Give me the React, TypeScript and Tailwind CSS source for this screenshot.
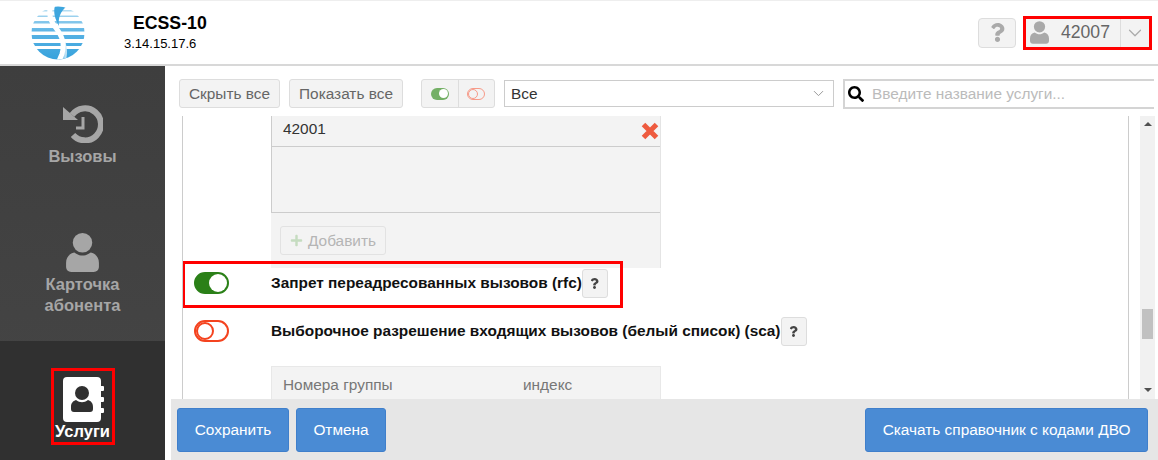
import React from 'react';
import { FaQuestion, FaPlus, FaSearch } from 'react-icons/fa';
import { ChevronDown } from 'lucide-react';

const Logo = () => (
  <svg width="54" height="54" viewBox="0 0 54 54">
    <defs>
      <clipPath id="disc"><circle cx="27" cy="27" r="26.5" /></clipPath>
      <linearGradient id="stripes" x1="0" x2="0" y1="0" y2="1">
        <stop offset="0" stopColor="#b5ddf2" />
        <stop offset="0.45" stopColor="#58b2e4" />
        <stop offset="1" stopColor="#36a2dc" />
      </linearGradient>
      <linearGradient id="tail" x1="0" x2="1" y1="0" y2="0">
        <stop offset="0" stopColor="#3ea6de" />
        <stop offset="1" stopColor="#d6edf9" />
      </linearGradient>
    </defs>
    <g clipPath="url(#disc)">
      <path
        d="M0 4h54v1.5H0zM0 9.5h54v1.5H0zM0 15h54v2.5H0zM0 22h54v3.5H0zM0 29h54v4H0zM0 37h54v3H0zM0 43h54v11H0z"
        fill="url(#stripes)"
      />
      <path d="M31 30c5 7 6 15 4 24h-7c3-8 3-16 3-24z" fill="url(#tail)" />
      <path d="M20-1C17 8 20 16 25 22c6 8 9 15 6 26l-3 7" fill="none" stroke="#fff" strokeWidth="5" />
      <path d="M24 0c-2 6 0 13 4 20-1-8 1-14 8-20z" fill="#3ea6de" />
    </g>
  </svg>
);

const HistoryIcon = () => (
  <svg width="40" height="38" viewBox="-1 0 40 38" fill="none" stroke="currentColor">
    <path d="M8 10A16 16 0 1 1 9 30" strokeWidth="6" />
    <path d="M-1 2v13h15z" fill="currentColor" stroke="none" />
    <path d="M19 12v11h-7" strokeWidth="3" />
  </svg>
);

const UserIcon = ({ className }: { className: string }) => (
  <svg viewBox="0 0 32 38" className={className} fill="currentColor">
    <circle cx="16" cy="9.5" r="9.5" />
    <path d="M8 19c5 4 11 4 16 0 5 1 8 5 8 10v4c0 3-2 5-5 5H5c-3 0-5-2-5-5v-4c0-5 3-9 8-10z" />
  </svg>
);

const BookIcon = () => (
  <svg width="41" height="45" viewBox="0 0 41 45">
    <rect width="38" height="45" rx="4" fill="#fff" />
    <path d="M38 9h2a1 1 0 0 1 1 1v3a1 1 0 0 1-1 1h-2zM38 20h2a1 1 0 0 1 1 1v3a1 1 0 0 1-1 1h-2zM38 31h2a1 1 0 0 1 1 1v3a1 1 0 0 1-1 1h-2z" fill="#fff" />
    <circle cx="19" cy="16" r="7" fill="#303030" />
    <path d="M13 23c4 3 8 3 12 0 3 1 5 3 5 7v2c0 2-1 3-3 3H11c-2 0-3-1-3-3v-2c0-4 2-6 5-7z" fill="#303030" />
  </svg>
);

const CrossIcon = () => (
  <svg width="18" height="18" viewBox="0 0 18 18" stroke="#ee5b3f" strokeWidth="5">
    <path d="M2.5 2.5l13 13M15.5 2.5l-13 13" />
  </svg>
);

const Toggle = ({ on }: { on: boolean }) => (
  <span className={`flex h-[22px] w-[35px] shrink-0 items-center rounded-full border-2 ${on ? 'justify-end border-[#2b8018] bg-[#2b8018]' : 'border-[#f4431f] bg-white'}`}>
    <span className={`size-[18px] rounded-full ${on ? 'bg-white' : 'border-2 border-[#f4431f] bg-white'}`} />
  </span>
);

const HelpButton = () => (
  <button className="flex h-[29px] w-[26px] shrink-0 items-center justify-center rounded-[3px] border border-[#ddd] bg-[#f3f3f3] text-[#444]">
    <FaQuestion size={11} />
  </button>
);

const ServiceRow = ({ on, title, className }: { on: boolean; title: string; className?: string }) => (
  <div className={`flex h-[30px] shrink-0 items-center pl-[11px] ${className ?? ''}`}>
    <Toggle on={on} />
    <span className="ml-[42px] text-[15.4px] font-bold text-[#111]">{title}</span>
    <HelpButton />
  </div>
);

const ToolButton = ({ className, children }: { className: string; children: React.ReactNode }) => (
  <button className={`h-[29px] rounded-[3px] border border-[#ddd] bg-[#f3f3f3] ${className}`}>{children}</button>
);

const FooterButton = ({ className, children }: { className: string; children: React.ReactNode }) => (
  <button className={`h-[44px] rounded-[3px] border border-[#3f7fcb] bg-[#4a8bd4] text-white ${className}`}>{children}</button>
);

export default function App() {
  return (
    <div className="flex h-[460px] w-[1158px] flex-col overflow-hidden bg-white font-['Liberation_Sans',Arial,sans-serif] text-[#333]">
      {/* шапка */}
      <header className="flex h-[66px] shrink-0 items-center border-t border-b-2 border-t-[#eee] border-b-[#d8d8d8] pr-[6px]">
        <div className="ml-[31px]"><Logo /></div>
        <div className="ml-[39px] w-[90px] text-black">
          <div className="pl-[9px] text-[17.7px] leading-[22px] font-bold">ECSS-10</div>
          <div className="text-[13px] leading-[20px]">3.14.15.17.6</div>
        </div>
        <div className="ml-auto flex items-center gap-[7px]">
          <button className="flex h-[30px] w-[38px] items-center justify-center rounded-[4px] border border-[#ddd] bg-[#f3f3f3] text-[#aaa]">
            <FaQuestion size={19} />
          </button>
          <div className="flex h-[34px] w-[129px] items-center border-[3px] border-[#f00] bg-[#f3f3f3] text-[17.6px] text-[#666]">
            <UserIcon className="ml-[4px] h-[23px] w-[19px] text-[#a9a9a9]" />
            <span className="ml-[12px] w-[59px]">42007</span>
            <span className="flex h-full flex-1 items-center justify-center border-l border-[#ddd] text-[#aaa]">
              <ChevronDown size={22} strokeWidth={1.3} />
            </span>
          </div>
        </div>
      </header>

      <div className="flex min-h-0 flex-1">
        {/* боковое меню */}
        <aside className="flex w-[165px] shrink-0 flex-col bg-linear-to-b from-[#3e3e3e] to-[#464646] text-[16.5px] font-bold text-[#a6a6a6]">
          <div className="flex h-[275px] flex-col items-center text-center">
            <div className="mt-[39px]"><HistoryIcon /></div>
            <span className="leading-[26px]">Вызовы</span>
            <UserIcon className="mt-[64px] h-[39px] w-[33px]" />
            <span className="mt-[2px] leading-[21px]">Карточка<br />абонента</span>
          </div>
          <div className="flex flex-1 items-start justify-center bg-[#303030] pt-[27px]">
            <div className="flex h-[77px] w-[64px] flex-col items-center border-[3px] border-[#f00] pt-[6px] pl-[1px] leading-[20px] text-white">
              <BookIcon />
              <span className="-mt-[1px] -ml-[1px]">Услуги</span>
            </div>
          </div>
        </aside>

        <main className="flex min-w-0 flex-1 flex-col">
          {/* панель фильтров */}
          <div className="flex h-[50px] shrink-0 items-center pt-[5px] pl-[14px] text-[15.4px] text-[#666]">
            <ToolButton className="w-[101px]">Скрыть все</ToolButton>
            <ToolButton className="ml-[9px] w-[114px]">Показать все</ToolButton>
            <div className="ml-[18px] flex h-[29px] w-[74px] rounded-[3px] border border-[#ddd] bg-[#f3f3f3]">
              <span className="flex flex-1 items-center justify-center border-r border-[#ddd]">
                <span className="flex h-[12px] w-[18px] items-center justify-end rounded-full bg-[#74b066] pr-[1px]">
                  <span className="size-[9px] rounded-full bg-white" />
                </span>
              </span>
              <span className="flex flex-1 items-center justify-center">
                <span className="flex h-[12px] w-[18px] rounded-full border border-[#f79a88]">
                  <span className="size-[10px] rounded-full border border-[#f79a88]" />
                </span>
              </span>
            </div>
            <div className="ml-[9px] flex h-[27px] w-[330px] items-center justify-between border border-[#ccc] px-[6px] text-[#333]">
              Все
              <ChevronDown size={17} strokeWidth={1.4} className="text-[#999]" />
            </div>
            <div className="mr-[4px] ml-[9px] flex h-[30px] flex-1 items-center border-y-2 border-l-2 border-[#d4d4d4] pl-[3px]">
              <FaSearch size={16} className="text-black" />
              <span className="ml-[8px] text-[#bbb]">Введите название услуги...</span>
            </div>
          </div>

          {/* список услуг */}
          <div className="flex min-h-0 flex-1">
            <div className="ml-[17px] flex w-[947px] flex-col overflow-hidden border-x border-[#ccc]">
              <div className="ml-[88px] w-[390px] shrink-0 border-r border-[#e4e4e4] bg-[#f3f3f3]">
                <div className="flex h-[31px] items-center justify-between border-b border-l border-[#ccc] pr-[1px] pl-[11px] text-[15.4px]">
                  <span className="-mt-[5px]">42001</span>
                  <CrossIcon />
                </div>
                <div className="h-[66px] border-b border-l border-[#ccc]" />
                <div className="h-[55px] pt-[13px] pl-[9px]">
                  <button className="flex h-[29px] w-[106px] items-center justify-center gap-[5px] rounded-[3px] border border-[#e2e2e2] text-[15.4px] text-[#b5b5b5]">
                    <FaPlus size={13} className="text-[#c5dcc0]" />
                    Добавить
                  </button>
                </div>
              </div>

              <div className="relative shrink-0">
                <ServiceRow on title="Запрет переадресованных вызовов (rfc)" />
                <div className="absolute -top-[7px] -left-[1px] h-[47px] w-[441px] border-[3px] border-[#f00]" />
              </div>
              <ServiceRow on={false} title="Выборочное разрешение входящих вызовов (белый список) (sca)" className="mt-[18px]" />

              <div className="mt-[20px] ml-[88px] flex h-[60px] w-[390px] shrink-0 border border-[#e8e8e8] bg-[#f3f3f3] pt-[6px] pl-[11px] text-[15.4px] text-[#777]">
                <span className="w-[240px]">Номера группы</span>
                <span>индекс</span>
              </div>
            </div>

            {/* полоса прокрутки */}
            <div className="ml-[11px] flex w-[15px] flex-col items-center bg-[#f1f1f1] pt-[6px]">
              <span className="size-0 border-x-[4px] border-b-[4px] border-x-transparent border-b-[#505050]" />
              <span className="mt-[183px] h-[30px] w-[11px] bg-[#c1c1c1]" />
              <span className="mt-auto mb-[7px] size-0 border-x-[4px] border-t-[4px] border-x-transparent border-t-[#505050]" />
            </div>
          </div>

          {/* нижняя панель */}
          <div className="ml-[6px] flex h-[61px] shrink-0 items-center gap-[7px] bg-[#e6e6e6] pr-[10px] pl-[6px] text-[15.4px]">
            <FooterButton className="w-[112px]">Сохранить</FooterButton>
            <FooterButton className="w-[90px]">Отмена</FooterButton>
            <FooterButton className="ml-auto w-[283px]">Скачать справочник с кодами ДВО</FooterButton>
          </div>
        </main>
      </div>
    </div>
  );
}
